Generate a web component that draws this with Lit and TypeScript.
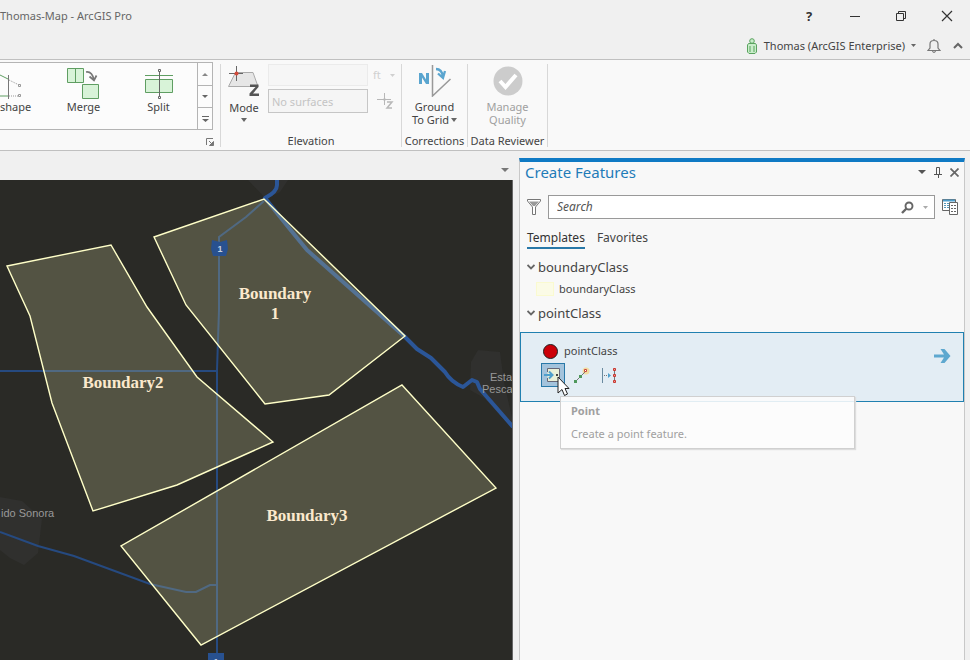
import { LitElement, html, css, svg } from "lit";
import { customElement, state } from "lit/decorators.js";
import { classMap } from "lit/directives/class-map.js";

const caret = (w: number, h: number) => html`<svg class="caret" width=${w} height=${h} viewBox="0 0 6 3" preserveAspectRatio="none" aria-hidden="true"><path d="M0 0h6L3 3z" fill="currentColor" /></svg>`;

const base = css`
  * { box-sizing: border-box; }
  :host { display: block; font: 12px/16px "Noto Sans", "Open Sans", sans-serif; color: #444; }
  button, input, select { font: inherit; color: inherit; margin: 0; padding: 0; border: 0; background: none; border-radius: 0; }
  button { display: flex; align-items: center; justify-content: center; }
  svg { display: block; flex: none; }
`;

@customElement("title-bar")
class TitleBar extends LitElement {
  static styles = [base, css`
    .row { display: flex; align-items: center; justify-content: space-between; }
    .top { height: 32px; }
    .title { white-space: nowrap; color: #666; margin: 0; font: inherit; font-size: 11px; }
    .window { display: flex; color: #333; }
    .window button { width: 46px; height: 32px; }
    .help { font-weight: 700; font-size: 13px; }
    .user { justify-content: flex-end; height: 27px; gap: 11px; padding-right: 6px; color: #444; }
    .account { gap: 6px; white-space: nowrap; font-size: 11px; }
    .account .caret { color: #666; }
  `];
  render() {
    return html`
      <div class="row top">
        <h1 class="title">Thomas-Map - ArcGIS Pro</h1>
        <div class="window">
          <button class="help" aria-label="Help">?</button>
          <button aria-label="Minimize"><svg width="12" height="12"><path d="M1 6.5h10" stroke="#333" /></svg></button>
          <button aria-label="Restore"><svg width="12" height="12" fill="none" stroke="#333"><path d="M1.5 3.5h7v7h-7zM3.5 3.5v-2h7v7h-2" /></svg></button>
          <button aria-label="Close"><svg width="12" height="12" stroke="#333" stroke-width="1.2"><path d="M1 1l10 10M11 1L1 11" /></svg></button>
        </div>
      </div>
      <div class="row user">
        <button class="account">
          <svg width="12" height="16" fill="#c9edca" stroke="#5aa35f"><circle cx="6" cy="3" r="2.3" /><path d="M2.5 5.5h7l1 1.5v7l-1.5 1.5H3L1.500 14V7zM4 8v6M8 8v6" /></svg>
          <span>Thomas (ArcGIS Enterprise)</span>${caret(5, 3)}
        </button>
        <button aria-label="Notifications"><svg width="14" height="16" fill="none" stroke="#777" stroke-width="1.2"><path d="M1 12.5h12L11 10V6Q11 2.5 7 2.5T3 6v4zM7 1v1.5M5.5 13q1.5 3 3 0" /></svg></button>
        <button aria-label="Collapse ribbon"><svg width="12" height="12" fill="none" stroke="#666" stroke-width="2"><path d="M2 8l4-4 4 4" /></svg></button>
      </div>`;
  }
}

@customElement("app-ribbon")
class AppRibbon extends LitElement {
  static styles = [base, css`
    .ribbon { display: flex; height: 92px; background: #f9f9f9; border-top: 1px solid #c0c0c0; border-bottom: 1px solid #c0c0c0; font-size: 11px; }
    .edit { width: 220px; padding-top: 2px; }
    .gallery { display: flex; width: 213px; height: 68px; border: 1px solid #b4b4b4; border-left: 0; background: #fcfcfc; }
    .items { display: flex; flex: 1; overflow: hidden; }
    .item { flex-direction: column; justify-content: flex-start; padding-top: 4px; width: 75px; }
    .item.cut { width: 46px; align-items: flex-start; }
    .item svg { height: 32px; }
    .scroll { display: grid; grid-template-rows: repeat(3, 1fr); width: 15px; border-left: 1px solid #b4b4b4; color: #666; }
    .scroll button + button { border-top: 1px solid #b4b4b4; }
    .launch { margin: 8px 6px 0 auto; }
    .group { display: flex; flex-direction: column; justify-content: space-between; margin: 4px 0 3px; border-left: 1px solid #d8d8d8; text-align: center; white-space: nowrap; }
    .group h2 { margin: 0; font: inherit; line-height: 12px; }
    .elevation { width: 181px; }
    .fields { display: grid; grid-template-columns: 100px 24px; gap: 3px 5px; align-items: center; align-content: start; }
    .row { display: flex; gap: 8px; padding-left: 7px; }
    .tool { flex-direction: column; line-height: 13px; gap: 3px; color: #444; }
    .tool .caret { color: #666; }
    .mode { width: 32px; gap: 4px; }
    .value { width: 100px; height: 22px; border: 1px solid #ebebeb; background: #f6f6f6; }
    .surface { height: 24px; border: 1px solid #c6c6c6; padding-left: 3px; background: #f5f5f5; }
    .surface::placeholder { color: #c4c4c4; opacity: 1; }
    .unit { display: flex; align-items: center; gap: 3px; color: #d0d0d0; }
    .unit select { appearance: none; width: 14px; opacity: 1; color: #d0d0d0; }
    .corrections { width: 66px; }
    .quality { width: 81px; border-right: 1px solid #d8d8d8; }
    .off { color: #a0a0a0; }
    .last { display: flex; align-items: center; gap: 2px; }
  `];
  render() {
    return html`
      <div class="ribbon">
        <section class="edit">
          <div class="gallery">
            <div class="items">
              <button class="item cut"><svg width="24" height="32" fill="none"><path d="M0 8l9 4.5M0 29h9" stroke="#5f9e62" /><path d="M8.5 8v24" stroke="#777" /><path d="M9 13l10 5M9 29h10" stroke="#999" stroke-dasharray="1 1" /><path d="M18.5 17.5h2v2h-2zM18.5 27.5h2v2h-2z" stroke="#999" /></svg><span>shape</span></button>
              <button class="item"><svg width="34" height="34" fill="#d8f3d8" stroke="#5f9e62"><path d="M.5 1.5h16v14h-16zM8.5 1.5v14M15.5 17.5h16v14h-16z" /><path d="M19 5q6-1 8 8M22.500 9.500l4.500 4 2.500-5" fill="none" stroke="#777" stroke-width="1.7" /></svg><span>Merge</span></button>
              <button class="item"><svg width="28" height="32" fill="#d8f3d8" stroke="#5f9e62"><path d="M0 8.5h28M.5 12.5h27v13H.5z" /><path d="M14.5 4v25M13.5 2.5h2v2h-2zM13.5 29.5h2v2h-2z" stroke="#666" fill="#fff" /></svg><span>Split</span></button>
            </div>
            <div class="scroll">
              <button aria-label="Previous"><svg width="6" height="3"><path d="M0 3h6L3 0z" fill="#888" /></svg></button>
              <button aria-label="Next">${caret(6, 3)}</button>
              <button aria-label="More"><svg width="7" height="6" fill="#666"><path d="M0 0h7v1H0zM0 3h7L3.5 6z" /></svg></button>
            </div>
          </div>
          <button class="launch" aria-label="Editing options"><svg width="8" height="8" fill="none" stroke="#777"><path d="M.5 7V.5H7M3 3l4 4" /><path d="M7.5 3.5v4h-4z" fill="#777" /></svg></button>
        </section>
        <section class="group elevation">
          <div class="row">
            <button class="tool mode">
              <svg width="32" height="33"><path d="M7.5 8.5H25L30 22.5H.5z" fill="#e6e6e6" stroke="#aaa" /><path d="M8.5 2v15M1 9.500h14" stroke="#666" /><circle cx="8.5" cy="9.5" r="2" fill="#d34a3a" /><path d="M22 20.5h8.5V23L25 29.500h6V32h-9.500v-2.500l6-6.500H22z" fill="#555" /></svg>
              <span>Mode</span>${caret(6, 4)}
            </button>
            <div class="fields">
              <input class="value" disabled aria-label="Elevation value" />
              <label class="unit"><select disabled aria-label="Unit"><option>ft</option></select>${caret(5, 3)}</label>
              <input class="surface value" disabled placeholder="No surfaces" aria-label="Surface" />
              <button disabled aria-label="Sample elevation"><svg width="18" height="18" fill="none" stroke="#b8b8b8"><path d="M8.5 1v12M1 7.5h14" /><circle cx="8.5" cy="7.5" r="1" /><path d="M11 10h5l-5 6h5" stroke-width="1.5" /></svg></button>
            </div>
          </div>
          <h2>Elevation</h2>
        </section>
        <section class="group corrections">
          <button class="tool">
            <svg width="34" height="33" fill="none"><path d="M14.5 1v31l18-17" stroke="#999" stroke-width="1.5" /><path d="M1 20V9h3l4 6.500V9h3v11H8l-4-6.500V20z" fill="#5aa5cf" /><path d="M18 5q6 0 7 8M20 9.500l5 4.500 2-7" stroke="#5aa5cf" stroke-width="2.3" /></svg>
            <span>Ground<br /><span class="last">To Grid ${caret(6, 4)}</span></span>
          </button>
          <h2>Corrections</h2>
        </section>
        <section class="group quality">
          <button class="tool off" disabled>
            <svg width="30" height="33"><circle cx="15" cy="17" r="14.5" fill="#ccc" /><path d="M7 17l5.500 6L23 11" fill="none" stroke="#fff" stroke-width="4" /></svg>
            <span>Manage<br />Quality</span>
          </button>
          <h2>Data Reviewer</h2>
        </section>
      </div>`;
  }
}

const parcels = [
  "7,86 111,65 147,127 197,197 273,262 177,305 93,331 52,223 30,136",
  "154,57 264,19 405,156 329,215 265,224 186,125",
  "402,205 496,308 201,465 121,366",
];

@customElement("map-view")
class MapView extends LitElement {
  static styles = [base, css`
    :host { display: flex; flex-direction: column; min-width: 0; min-height: 0; }
    .strip { display: flex; justify-content: flex-end; height: 29px; padding: 8px 4px 0 0; color: #777; background: #f0f0f0; }
    .map { flex: 1; min-height: 0; width: 100%; background: #2a2a26; border-right: 1px solid #666; }
    .land { fill: #353535; opacity: 0.5; }
    .road { fill: none; stroke: #264a80; stroke-width: 2; }
    .river { fill: none; stroke: #2b5698; stroke-width: 4; stroke-linejoin: round; }
    .parcel { fill: #b4b287; fill-opacity: 0.3; stroke: #ffffc8; }
    .name { font: bold 17px "Liberation Serif", serif; fill: #fbe9cd; text-anchor: middle; }
    .place { font: 11px "Liberation Sans", sans-serif; fill: #999; }
    .shield { fill: #285190; }
    .num { font: bold 9px "Liberation Sans", sans-serif; fill: #c4d0e0; text-anchor: middle; }
  `];
  render() {
    return html`
      <div class="strip"><button aria-label="View list">${caret(8, 4)}</button></div>
      <svg class="map" viewBox="0 0 512 480" preserveAspectRatio="xMinYMin slice" role="img" aria-label="Boundaries map">
        <path class="land" d="M0 317l22 4 20 18-4 34-14 12-14-7-10-8z" />
        <path class="land" d="M248 0h40l-8 12-14 7zM471 182l7-12 22 2 4 30 8 36v10l-28-30-14-8z" />
        <path class="road" d="M0 191H217M0 352l38 14 36 10 76 28 36 8h10l14-7h6M264 21l-18 16-27 20v73l-2 60V480" />
        <path class="river" d="M277 0v5q0 7-12 13l24 30 18 22 97 86 13 13 14 9 14 14q6 10 18 15l9-7 5 2 3 7 33 38" />
        ${parcels.map((p) => svg`<polygon class="parcel" points=${p} stroke-width="1.4" />`)}
        <path class="shield" d="M212 60l8 2 7-2 1 9-2 7h-13l-2-7zM208 473h16v8h-16z" />
        <text class="num" x="220" y="72">1</text>
        <text class="num" x="216" y="485">1</text>
        <text class="name" x="275" y="119">Boundary</text>
        <text class="name" x="275" y="139">1</text>
        <text class="name" x="123" y="208">Boundary2</text>
        <text class="name" x="307" y="341">Boundary3</text>
        <text class="place" x="1" y="337">ido Sonora</text>
        <text class="place" x="490" y="201">Esta</text>
        <text class="place" x="482" y="213">Pesca</text>
      </svg>`;
  }
}

const chevron = html`<svg width="8" height="6" fill="none" stroke="#666" stroke-width="1.8" aria-hidden="true"><path d="M.5 1L4 4.5 7.5 1" /></svg>`;

@customElement("create-features")
class CreateFeatures extends LitElement {
  @state() tab = "Templates";
  static styles = [base, css`
    :host { display: flex; flex-direction: column; border: 1px solid #c8c8c8; border-top: 4px solid #0f7ac4; border-bottom: 0; background: #f8f8f8; }
    .head { display: flex; align-items: center; height: 20px; padding: 0 5px; gap: 8px; color: #555; }
    .head h2 { flex: 1; margin: 0; font: inherit; font-size: 15px; line-height: 20px; color: #1f7cb8; }
    .search { display: flex; align-items: center; gap: 7px; padding: 13px 5px 0 7px; }
    .box { display: flex; flex: 1; align-items: center; height: 24px; border: 1px solid #999; background: #fff; padding: 0 6px 0 8px; gap: 9px; }
    .box input { flex: 1; min-width: 0; font-style: italic; outline: 0; }
    .box input::placeholder { color: #555; opacity: 1; }
    .box .caret { color: #aaa; }
    .tabs { display: flex; gap: 12px; padding: 10px 7px 0; }
    .tab { padding-bottom: 1px; height: 20px; border-bottom: 2px solid transparent; }
    .tab.on { border-color: #2878a8; color: #333; }
    .class { gap: 3px; margin: 9px 0 0 7px; height: 18px; font-size: 13px; }
    .class.next { margin-top: 6px; }
    .template { gap: 5px; margin: 3px 0 0 16px; height: 19px; font-size: 11px; }
    .swatch { width: 18px; height: 14px; background: #fbfbe6; border: 1px solid #fafad0; }
    .selected { position: relative; display: flex; align-items: flex-start; margin-top: 10px; height: 70px; padding: 9px 12px 0 20px; background: #e3edf4; border: 1px solid #2080b0; }
    .body { flex: 1; }
    .point { gap: 6px; padding-left: 2px; height: 18px; font-size: 11px; }
    .dot { width: 15px; height: 15px; border-radius: 50%; background: #cc0008; border: 1px solid #222; }
    .tools { display: flex; gap: 4px; margin-top: 3px; }
    .tools button { width: 24px; height: 24px; }
    .tools .on { background: #a3c3dc; border: 1px solid #2878a8; }
    .open { margin-top: 7px; }
    .tip { position: absolute; top: 63px; left: 39px; width: 295px; height: 53px; padding: 6px 10px; border: 1px solid #d0d0d0; box-shadow: 1px 1px 1px #ddd; background: rgb(252 252 252 / 88%); color: #a0a0a0; font-size: 11px; }
    .tip p { margin: 7px 0 0; }
    .pointer { position: absolute; top: 43px; left: 36px; }
  `];
  render() {
    return html`
      <div class="head">
        <h2>Create Features</h2>
        <button aria-label="Pane options">${caret(8, 4)}</button>
        <button aria-label="Auto hide"><svg width="8" height="11" fill="none" stroke="#555"><path d="M2.5 7V.5h3V7M0 7.5h8M4.5 7.5V11" /></svg></button>
        <button aria-label="Close"><svg width="9" height="9" stroke="#666" stroke-width="1.7"><path d="M.5.5l8 8M8.5.5l-8 8" /></svg></button>
      </div>
      <div class="search">
        <button aria-label="Filter"><svg width="14" height="18"><path d="M.5 1.5h13V3L8.5 9v7.5h-3V9L.5 3z" fill="#fff" stroke="#777" /><path d="M2 3.5h10L8 8H6z" fill="#999" /></svg></button>
        <div class="box">
          <input type="text" placeholder="Search" aria-label="Search templates" />
          <button aria-label="Find"><svg width="13" height="13" fill="none" stroke="#666"><circle cx="8" cy="5" r="3.5" stroke-width="1.9" /><path d="M5.5 7.5L1 12" stroke-width="2.4" /></svg></button>
          <button aria-label="Search options">${caret(5, 3)}</button>
        </div>
        <button aria-label="Manage templates"><svg width="17" height="18" fill="#fff" stroke="#666"><path d="M.5 1.5h13v11H.5z" /><path d="M1 2.5h12" stroke="#4f9fcc" stroke-width="2" /><path d="M2 5.5h7M2 7.5h7M2 9.5h7" stroke="#5599bb" stroke-dasharray="2 1" /><path d="M7.5 4.5h8v12h-8z" /><path d="M9 7.5h5M9 10.5h5M9 13.5h5" stroke-dasharray="2 1" /></svg></button>
      </div>
      <div class="tabs" role="tablist">
        ${["Templates", "Favorites"].map((t) => html`<button role="tab" aria-selected=${this.tab === t} class=${classMap({ tab: true, on: this.tab === t })} @click=${() => (this.tab = t)}>${t}</button>`)}
      </div>
      <div><button class="class" aria-expanded="true">${chevron}boundaryClass</button></div>
      <div><button class="template"><span class="swatch"></span>boundaryClass</button></div>
      <div><button class="class next" aria-expanded="true">${chevron}pointClass</button></div>
      <div class="selected">
        <div class="body">
          <button class="point"><span class="dot"></span>pointClass</button>
          <div class="tools">
            <button class="on" aria-label="Point"><svg width="18" height="16" fill="none"><path d="M3.5 5V1.5h12v13h-12V11" stroke="#667" fill="#e9f0d8" /><path d="M0 8h8M5 4.5L8.5 8 5 11.5" stroke="#4f9fcc" stroke-width="2" /><path d="M12 7h2v2h-2z" fill="#444" /></svg></button>
            <button aria-label="Point at end of line"><svg width="17" height="17" fill="none"><circle cx="13" cy="4" r="3.5" fill="#f2dca0" /><path d="M2.5 14.5L12.5 4.5" stroke="#777" /><path d="M1 13h3v3H1zM6 8h3v3H6z" fill="#4f985b" /><path d="M11.5 2.5h2v2h-2z" stroke="#c8453a" fill="#fff" /></svg></button>
            <button aria-label="Points along line"><svg width="16" height="17" fill="none"><path d="M1.5 1v15" stroke="#6a8a9f" /><path d="M3 8.5h4" stroke="#777" stroke-dasharray="1 1" /><path d="M7 6l3 2.5L7 11z" fill="#4f9fcc" /><path d="M13.5 2v13" stroke="#777" /><path d="M12.5 1.5h2v2h-2zM12.5 7.5h2v2h-2zM12.5 13.5h2v2h-2z" stroke="#c8392f" fill="#e99" /></svg></button>
          </div>
        </div>
        <button class="open" aria-label="Open template"><svg width="17" height="14" fill="#5ea8cf"><path d="M0 5.5h10L6.5 0h4L16.5 7l-6 7h-4L10 8.5H0z" /></svg></button>
        <div class="tip" role="tooltip"><strong>Point</strong><p>Create a point feature.</p></div>
        <svg class="pointer" width="13" height="21"><path d="M1 1v16l4-3.5 2.5 6 3-1.5L8 12.5h4z" fill="#fff" stroke="#222" /></svg>
      </div>`;
  }
}

@customElement("app-root")
class AppRoot extends LitElement {
  static styles = [base, css`
    :host { display: flex; flex-direction: column; height: 100vh; overflow: hidden; background: #f0f0f0; }
    .work { display: grid; flex: 1; min-height: 0; grid-template-columns: minmax(0, 1fr) 446px; grid-template-rows: minmax(0, 1fr); gap: 6px; padding-right: 5px; }
    .pane { margin-top: 7px; }
  `];
  render() {
    return html`
      <title-bar></title-bar>
      <app-ribbon></app-ribbon>
      <main class="work"><map-view></map-view><create-features class="pane"></create-features></main>`;
  }
}
